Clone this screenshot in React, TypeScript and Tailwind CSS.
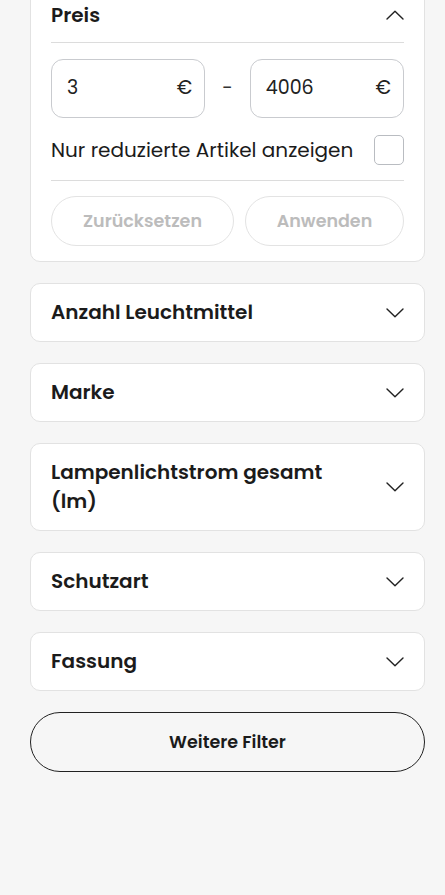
import React from "react"

const font = { fontFamily: '"Poppins", "Open Sans", "Liberation Sans", sans-serif' }

function Chevron({ up = false }: { up?: boolean }) {
  return (
    <svg width="18" height="10" viewBox="0 0 18 10" fill="none" className="shrink-0">
      <polyline
        points={up ? "1,9 9,1.2 17,9" : "1,1 9,8.8 17,1"}
        stroke="#222"
        strokeWidth="1.4"
        strokeLinecap="round"
        strokeLinejoin="round"
      />
    </svg>
  )
}

function FilterCard({ title }: { title: string }) {
  return (
    <div className="flex items-center justify-between gap-6 rounded-[10px] border border-[#e2e2e2] bg-white pl-[20px] pr-[20px] py-[14px]">
      <span className="text-[20px] font-semibold leading-[29px] text-[#1b1b1b]">{title}</span>
      <Chevron />
    </div>
  )
}

function PriceInput({ value }: { value: string }) {
  return (
    <div className="flex h-[59px] flex-1 items-center justify-between rounded-[12px] border border-[#c9cbcf] bg-white pl-[15px] pr-[12px] text-[19px] text-[#222]">
      <span>{value}</span>
      <span>€</span>
    </div>
  )
}

export default function App() {
  return (
    <div style={font} className="min-h-[895px] bg-[#f6f6f6] pl-[30px] pr-[20px]">
      <div className="-mt-[14px] flex flex-col gap-[21px] pb-[124px]">
        <div className="rounded-[10px] border border-[#e2e2e2] bg-white px-[20px] pb-[15px]">
          <div className="flex h-[56px] items-center justify-between border-b border-[#dcdcdc]">
            <span className="text-[20px] font-semibold text-[#1b1b1b]">Preis</span>
            <Chevron up />
          </div>
          <div className="mt-[16px] flex items-center gap-[17px]">
            <PriceInput value="3" />
            <span className="text-[19px] text-[#333]">-</span>
            <PriceInput value="4006" />
          </div>
          <div className="flex items-center justify-between border-b border-[#dcdcdc] pb-[15px] pt-[17px]">
            <span className="text-[20px] text-[#1b1b1b]">Nur reduzierte Artikel anzeigen</span>
            <span className="h-[30px] w-[30px] rounded-[5px] border border-[#b9bcc1] bg-white" />
          </div>
          <div className="mt-[15px] flex gap-[11px]">
            <button className="h-[50px] w-[183px] rounded-full border border-[#e3e3e3] bg-white text-[17.5px] font-semibold text-[#bcbcbc]">
              Zurücksetzen
            </button>
            <button className="h-[50px] flex-1 rounded-full border border-[#e3e3e3] bg-white text-[17.5px] font-semibold text-[#bcbcbc]">
              Anwenden
            </button>
          </div>
        </div>
        <FilterCard title="Anzahl Leuchtmittel" />
        <FilterCard title="Marke" />
        <FilterCard title="Lampenlichtstrom gesamt (lm)" />
        <FilterCard title="Schutzart" />
        <FilterCard title="Fassung" />
        <button className="h-[60px] w-full rounded-full border border-[#222] text-[17.5px] font-semibold text-[#1b1b1b]">
          Weitere Filter
        </button>
      </div>
    </div>
  )
}
